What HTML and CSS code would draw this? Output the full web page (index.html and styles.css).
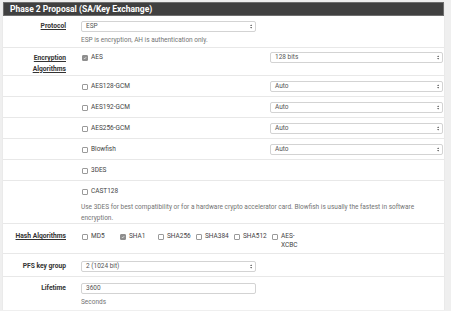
FILE: index.html
```html
<!DOCTYPE html>
<html lang="en">
<head>
    <meta charset="UTF-8">
    <title>Phase 2 Proposal</title>
    <link rel="stylesheet" href="styles.css">
</head>
<body>
    <div class="panel">
        <div class="panel-heading">Phase 2 Proposal (SA/Key Exchange)</div>

        <div class="row row-top">
            <div class="label"><span class="tip">Protocol</span></div>
            <div class="field">
                <div class="select half">ESP<svg class="arrows" viewBox="0 0 4 7"><path d="M2 0L4 2.6H0Z M2 7L4 4.4H0Z"/></svg></div>
                <div class="help">ESP is encryption, AH is authentication only.</div>
            </div>
        </div>

        <div class="row row-enc">
            <div class="label two-line"><span class="tip">Encryption Algorithms</span></div>
            <div class="field enc">
                <label class="check"><span class="cb on"><svg viewBox="0 0 6 6"><path d="M1.3 3.1L2.5 4.3L4.8 1.7"/></svg></span>AES</label>
                <div class="select">128 bits<svg class="arrows" viewBox="0 0 4 7"><path d="M2 0L4 2.6H0Z M2 7L4 4.4H0Z"/></svg></div>
            </div>
        </div>

        <div class="row">
            <div class="label"></div>
            <div class="field enc">
                <label class="check"><span class="cb"></span>AES128-GCM</label>
                <div class="select">Auto<svg class="arrows" viewBox="0 0 4 7"><path d="M2 0L4 2.6H0Z M2 7L4 4.4H0Z"/></svg></div>
            </div>
        </div>

        <div class="row">
            <div class="label"></div>
            <div class="field enc">
                <label class="check"><span class="cb"></span>AES192-GCM</label>
                <div class="select">Auto<svg class="arrows" viewBox="0 0 4 7"><path d="M2 0L4 2.6H0Z M2 7L4 4.4H0Z"/></svg></div>
            </div>
        </div>

        <div class="row">
            <div class="label"></div>
            <div class="field enc">
                <label class="check"><span class="cb"></span>AES256-GCM</label>
                <div class="select">Auto<svg class="arrows" viewBox="0 0 4 7"><path d="M2 0L4 2.6H0Z M2 7L4 4.4H0Z"/></svg></div>
            </div>
        </div>

        <div class="row">
            <div class="label"></div>
            <div class="field enc">
                <label class="check"><span class="cb"></span>Blowfish</label>
                <div class="select">Auto<svg class="arrows" viewBox="0 0 4 7"><path d="M2 0L4 2.6H0Z M2 7L4 4.4H0Z"/></svg></div>
            </div>
        </div>

        <div class="row">
            <div class="label"></div>
            <div class="field">
                <label class="check"><span class="cb"></span>3DES</label>
            </div>
        </div>

        <div class="row row-help">
            <div class="label"></div>
            <div class="field">
                <label class="check"><span class="cb"></span>CAST128</label>
                <div class="help wide">Use 3DES for best compatibility or for a hardware crypto accelerator card. Blowfish is usually the fastest in software encryption.</div>
            </div>
        </div>

        <div class="row row-hash">
            <div class="label"><span class="tip">Hash Algorithms</span></div>
            <div class="field hash">
                <label class="check"><span class="cb"></span>MD5</label>
                <label class="check"><span class="cb on"><svg viewBox="0 0 6 6"><path d="M1.3 3.1L2.5 4.3L4.8 1.7"/></svg></span>SHA1</label>
                <label class="check"><span class="cb"></span>SHA256</label>
                <label class="check"><span class="cb"></span>SHA384</label>
                <label class="check"><span class="cb"></span>SHA512</label>
                <label class="check"><span class="cb"></span>AES-XCBC</label>
            </div>
        </div>

        <div class="row row-pfs">
            <div class="label">PFS key group</div>
            <div class="field">
                <div class="select half">2 (1024 bit)<svg class="arrows" viewBox="0 0 4 7"><path d="M2 0L4 2.6H0Z M2 7L4 4.4H0Z"/></svg></div>
            </div>
        </div>

        <div class="row row-last">
            <div class="label">Lifetime</div>
            <div class="field">
                <div class="input half">3600</div>
                <div class="help low">Seconds</div>
            </div>
        </div>
    </div>
</body>
</html>
```

FILE: styles.css
```css
body {
    font-family: Roboto, "Liberation Sans", sans-serif;
    font-size: 6.5px;
    color: #333;
    background: #efefef;
    margin: 0;
    padding: 2px 7px 0 3px;
}

.panel {
    background: #fff;
    box-shadow: 0 1px 1px rgba(0, 0, 0, 0.12);
}

.panel-heading {
    background: #404040;
    border: 1px solid #6e6e6e;
    color: #fff;
    font-weight: bold;
    font-size: 8.5px;
    height: 12px;
    line-height: 12px;
    padding-left: 6px;
}

.row {
    display: grid;
    grid-template-columns: 63px 1fr;
    column-gap: 15px;
    padding: 5px 1px 4px 0;
    border-bottom: 1px solid #e8e8e8;
    line-height: 11px;
}

.row-top {
    padding-top: 5px;
    padding-bottom: 2px;
}

.row-enc {
    padding-top: 4px;
    padding-bottom: 1px;
}

.row-help {
    padding-bottom: 0;
}

.row-hash {
    padding-top: 7px;
    padding-bottom: 3px;
}

.row-pfs {
    padding-top: 7px;
    padding-bottom: 4px;
}

.row-last {
    border-bottom: none;
    padding-top: 6px;
    padding-bottom: 3px;
}

.label {
    text-align: right;
    font-weight: bold;
    font-size: 6.7px;
    color: #333;
}

.two-line {
    line-height: 10.7px;
    padding-top: 1px;
}

.tip {
    text-decoration: underline;
}

.field.enc {
    display: grid;
    grid-template-columns: 189px 1fr;
}

.field.hash {
    display: grid;
    grid-template-columns: repeat(6, 38px);
    line-height: 9px;
    padding-top: 1px;
}

.select,
.input {
    position: relative;
    height: 9px;
    line-height: 9px;
    border: 1px solid #d3d3d3;
    border-radius: 2px;
    padding-left: 4px;
    color: #555;
    background: #fff;
}

.select.half,
.input.half {
    width: 169px;
}

.arrows {
    position: absolute;
    right: 3px;
    top: 2px;
    width: 2.4px;
    height: 5px;
    fill: #666;
}

.check {
    display: flex;
    align-items: flex-start;
    color: #444;
    padding-left: 1px;
}

.cb {
    flex: none;
    width: 4px;
    height: 4px;
    border: 0.7px solid #9a9a9a;
    border-radius: 1px;
    margin: 3px 3px 0 0;
    background: #fff;
}

.field.hash .cb {
    margin-top: 2px;
}

.cb.on {
    background: #8f8f8f;
    border-color: #8f8f8f;
}

.cb svg {
    display: block;
    width: 4px;
    height: 4px;
    fill: none;
    stroke: #fff;
    stroke-width: 1;
}

.help {
    color: #737373;
    margin-top: 4px;
    line-height: 9px;
}

.help.wide {
    margin-top: 5px;
    line-height: 10.5px;
}

.help.low {
    margin-top: 4px;
}
```
